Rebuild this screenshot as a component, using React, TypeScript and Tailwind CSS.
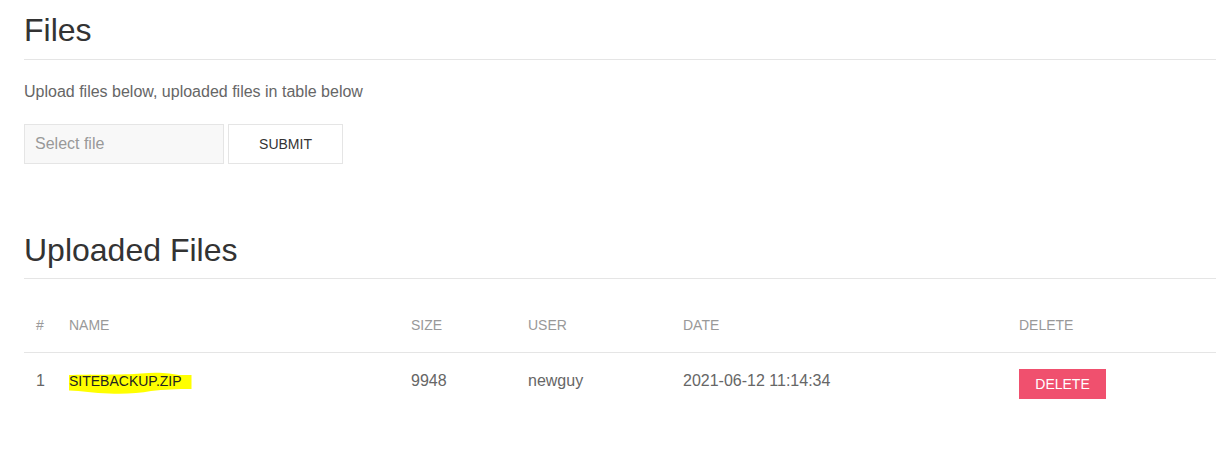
import React from "react";

type FileRow = {
  id: number;
  name: string;
  size: number;
  user: string;
  date: string;
};

const files: FileRow[] = [
  { id: 1, name: "sitebackup.zip", size: 9948, user: "newguy", date: "2021-06-12 11:14:34" },
];

function Highlight({ children }: { children: React.ReactNode }) {
  return (
    <span className="relative inline-block">
      <svg
        className="absolute left-0 top-[3px] h-[23px] w-[123px]"
        viewBox="0 0 123 23"
        aria-hidden="true"
      >
        <path
          d="M0 3 C 20 2.5, 55 3, 72 1.5 C 82 0.5, 92 0.5, 100 1.5 L 110 3 L 122.5 3 L 122.5 17 C 108 17, 95 17.5, 82 19 C 70 21.5, 55 22, 40 21.5 C 25 21, 12 19, 0 18.5 Z"
          fill="#ffff00"
        />
      </svg>
      <span className="relative">{children}</span>
    </span>
  );
}

export default function App() {
  return (
    <div className="min-h-[451px] bg-white pl-6 pt-[10px] font-['Liberation_Sans',Arial,sans-serif] text-[16px] leading-[24px] text-[#666]">
      <h1 className="border-b border-[#e5e5e5] pb-[7px] text-[32px] leading-[41.6px] text-[#333]">
        Files
      </h1>
      <p className="mt-5">Upload files below, uploaded files in table below</p>

      <form className="mt-5 flex gap-1" onSubmit={(e) => e.preventDefault()}>
        <input
          type="text"
          placeholder="Select file"
          className="h-10 w-[200px] border border-[#e5e5e5] bg-[#f8f8f8] px-[10px] text-[16px] text-[#666] outline-none placeholder:text-[#999]"
        />
        <button
          type="submit"
          className="h-10 w-[115px] border border-[#e5e5e5] bg-white text-[14px] uppercase text-[#333]"
        >
          Submit
        </button>
      </form>

      <h2 className="mt-[66px] border-b border-[#e5e5e5] pb-[7px] text-[32px] leading-[41.6px] text-[#333]">
        Uploaded Files
      </h2>

      <table className="mt-5 w-full table-fixed border-collapse">
        <colgroup>
          <col className="w-[33px]" />
          <col className="w-[342px]" />
          <col className="w-[117px]" />
          <col className="w-[155px]" />
          <col className="w-[336px]" />
          <col />
        </colgroup>
        <thead>
          <tr className="border-b border-[#e5e5e5]">
            {["#", "Name", "Size", "User", "Date", "Delete"].map((h) => (
              <th
                key={h}
                className="px-3 py-4 text-left align-bottom text-[14px] font-normal leading-[21px] uppercase text-[#999]"
              >
                {h}
              </th>
            ))}
          </tr>
        </thead>
        <tbody>
          {files.map((f) => (
            <tr key={f.id}>
              <td className="px-3 py-4 align-top">{f.id}</td>
              <td className="px-3 py-4 align-top text-[14px] uppercase text-[#222]">
                <Highlight>{f.name}</Highlight>
              </td>
              <td className="px-3 py-4 align-top">{f.size}</td>
              <td className="px-3 py-4 align-top">{f.user}</td>
              <td className="px-3 py-4 align-top">{f.date}</td>
              <td className="px-3 py-4 align-top">
                <button
                  type="button"
                  className="h-[30px] w-[87px] bg-[#f0506e] text-center text-[14px] leading-[30px] uppercase text-white"
                >
                  Delete
                </button>
              </td>
            </tr>
          ))}
        </tbody>
      </table>
    </div>
  );
}
